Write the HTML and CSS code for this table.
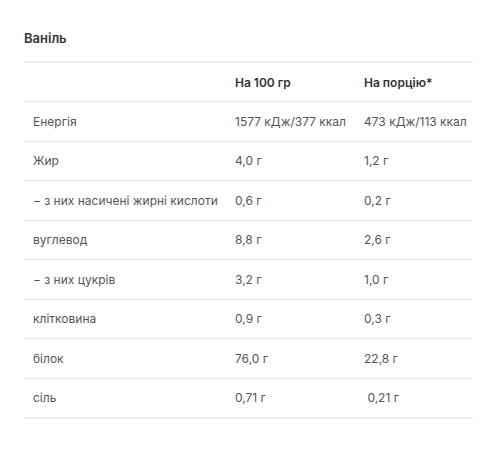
FILE: index.html
```html
<!DOCTYPE html>
<html lang="uk">
<head>
<meta charset="utf-8">
<link rel="stylesheet" href="styles.css">
</head>
<body>
<div class="panel">
  <h3 class="title">Ваніль</h3>
  <table class="nutri">
    <colgroup>
      <col class="c1"><col class="c2"><col class="c3">
    </colgroup>
    <thead>
      <tr><th></th><th>На 100 гр</th><th>На порцію*</th></tr>
    </thead>
    <tbody>
      <tr><td>Енергія</td><td>1577 кДж/377 ккал</td><td>473 кДж/113 ккал</td></tr>
      <tr><td>Жир</td><td>4,0 г</td><td>1,2 г</td></tr>
      <tr><td>− з них насичені жирні кислоти</td><td>0,6 г</td><td>0,2 г</td></tr>
      <tr><td>вуглевод</td><td>8,8 г</td><td>2,6 г</td></tr>
      <tr><td>− з них цукрів</td><td>3,2 г</td><td>1,0 г</td></tr>
      <tr><td>клітковина</td><td>0,9 г</td><td>0,3 г</td></tr>
      <tr><td>білок</td><td>76,0 г</td><td>22,8 г</td></tr>
      <tr><td>сіль</td><td>0,71 г</td><td>&nbsp;0,21 г</td></tr>
    </tbody>
  </table>
</div>
</body>
</html>
```

FILE: styles.css
```css
html, body {
  margin: 0;
  padding: 0;
  background: #ffffff;
}
body {
  font-family: Inter, "Noto Sans", sans-serif;
  color: #555555;
}
.panel {
  padding: 29px 27px 0 24px;
}
.title {
  margin: 0 0 14px 0;
  font-size: 13px;
  line-height: 18px;
  font-weight: 600;
  color: #333333;
}
.nutri {
  width: 449px;
  border-collapse: collapse;
  table-layout: fixed;
  font-size: 12px;
}
.c1 { width: 202px; }
.c2 { width: 129px; }
.c3 { width: 118px; }
.nutri th,
.nutri td {
  height: 39.5px;
  padding: 0 0 0 9px;
  text-align: left;
  vertical-align: middle;
  border-bottom: 1px solid #e6e6e6;
  white-space: nowrap;
  box-sizing: border-box;
}
.nutri thead th {
  border-top: 2px solid #eeeeee;
  font-weight: 600;
  color: #333333;
}
.nutri tbody tr:last-child td {
  border-bottom: 2px solid #eeeeee;
}
```
